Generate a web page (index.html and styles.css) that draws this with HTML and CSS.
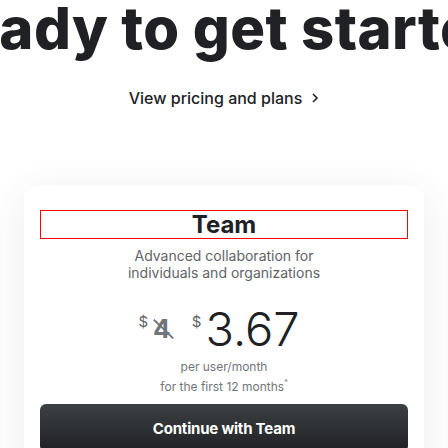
FILE: index.html
```html
<!DOCTYPE html>
<html lang="en">
<head>
<meta charset="utf-8">
<title>Pricing</title>
<link rel="stylesheet" href="styles.css">
</head>
<body>
<main class="page">
  <div class="hero-wrap"><h1 class="hero">Ready to get started?</h1></div>
  <a class="plans-link" href="#">View pricing and plans
    <svg class="chev" viewBox="0 0 8 12" width="8" height="12" aria-hidden="true"><path d="M2 2l4 4-4 4" fill="none" stroke="currentColor" stroke-width="1.6"/></svg>
  </a>
  <section class="card">
    <h2 class="plan">Team</h2>
    <p class="desc">Advanced collaboration for<br>individuals and organizations</p>
    <div class="price">
      <span class="cur cur-old">$</span><span class="old">4</span>
      <span class="cur cur-new">$</span><span class="amount">3.67</span>
    </div>
    <p class="terms">per user/month<br>for the first 12 months<sup class="ast">*</sup></p>
    <button class="cta" type="button">Continue with Team</button>
  </section>
</main>
</body>
</html>
```
FILE: styles.css
```css
html, body {
  margin: 0;
  padding: 0;
  background: #ffffff;
  overflow: hidden;
}
body {
  font-family: Inter, "Noto Sans", sans-serif;
  color: #202124;
}
.page {
  display: flex;
  flex-direction: column;
  align-items: center;
  width: 448px;
}
.hero-wrap {
  width: 448px;
  display: flex;
  justify-content: center;
}
.hero {
  margin: 0;
  padding-left: 24px;
  flex: none;
  white-space: nowrap;
  font-size: 58px;
  line-height: 56px;
  font-weight: 800;
  letter-spacing: 0.4px;
  color: #202124;
}
.plans-link {
  margin-top: 30px;
  display: flex;
  align-items: center;
  gap: 9px;
  font-size: 16px;
  line-height: 24px;
  font-weight: 500;
  color: #202124;
  text-decoration: none;
}
.chev { display: block; }
.card {
  margin-top: 76px;
  width: 400px;
  box-sizing: border-box;
  padding: 24px 16px 24px;
  background: #ffffff;
  border-radius: 12px;
  box-shadow: 0 8px 40px rgba(60, 64, 67, 0.10);
  display: flex;
  flex-direction: column;
  align-items: stretch;
  text-align: center;
}
.plan {
  margin: 0;
  border: 1px solid #ff0000;
  font-size: 24px;
  line-height: 27px;
  font-weight: 700;
  color: #202124;
}
.desc {
  margin: 8px 0 0;
  font-size: 14px;
  line-height: 17px;
  color: #5f6368;
}
.price {
  margin-top: 13px;
  padding-right: 10px;
  height: 56px;
  line-height: 56px;
  font-size: 47px;
  white-space: nowrap;
}
.cur {
  font-size: 15px;
  color: #5f6368;
  vertical-align: 19px;
}
.cur-new { margin-left: 8px; margin-right: 4px; }
.old {
  position: relative;
  display: inline-block;
  margin-left: 5px;
  font-size: 26px;
  line-height: 26px;
  font-weight: 700;
  color: #70757a;
  vertical-align: 8px;
}
.old::after {
  content: "";
  position: absolute;
  left: -3px;
  top: 12px;
  width: 27px;
  height: 2px;
  background: #70757a;
  transform: rotate(44deg);
}
.amount {
  font-weight: 300;
  color: #202124;
}
.terms {
  margin: 7px 0 0;
  font-size: 12px;
  line-height: 20px;
  color: #70757a;
}
.ast {
  font-size: 7px;
  vertical-align: 6px;
  line-height: 0;
}
.cta {
  margin-top: 7px;
  height: 48px;
  border: none;
  border-radius: 6px;
  background: linear-gradient(180deg, #3c4043 0%, #202124 100%);
  color: #ffffff;
  font-family: Inter, "Noto Sans", sans-serif;
  font-size: 15px;
  font-weight: 700;
  letter-spacing: -0.2px;
}
```
